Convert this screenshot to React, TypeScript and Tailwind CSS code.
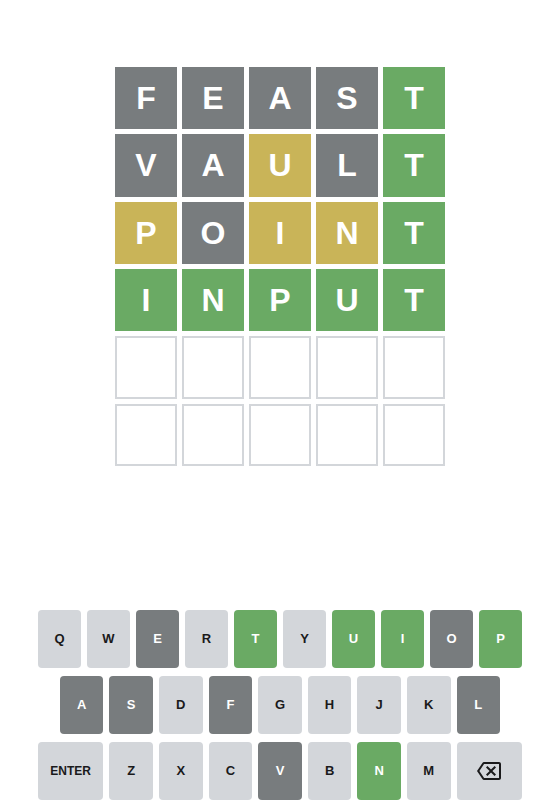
import React from "react";

type State = "absent" | "present" | "correct" | "empty" | "idle";

const guesses: { letter: string; state: State }[][] = [
  [
    { letter: "F", state: "absent" },
    { letter: "E", state: "absent" },
    { letter: "A", state: "absent" },
    { letter: "S", state: "absent" },
    { letter: "T", state: "correct" },
  ],
  [
    { letter: "V", state: "absent" },
    { letter: "A", state: "absent" },
    { letter: "U", state: "present" },
    { letter: "L", state: "absent" },
    { letter: "T", state: "correct" },
  ],
  [
    { letter: "P", state: "present" },
    { letter: "O", state: "absent" },
    { letter: "I", state: "present" },
    { letter: "N", state: "present" },
    { letter: "T", state: "correct" },
  ],
  [
    { letter: "I", state: "correct" },
    { letter: "N", state: "correct" },
    { letter: "P", state: "correct" },
    { letter: "U", state: "correct" },
    { letter: "T", state: "correct" },
  ],
];

const tileClass: Record<State, string> = {
  absent: "bg-[#787c7e] text-white",
  present: "bg-[#c9b458] text-white",
  correct: "bg-[#6aaa64] text-white",
  empty: "border-2 border-[#d3d6da] bg-white",
  idle: "border-2 border-[#d3d6da] bg-white",
};

const keyClass: Record<State, string> = {
  absent: "bg-[#787c7e] text-white",
  present: "bg-[#c9b458] text-white",
  correct: "bg-[#6aaa64] text-white",
  empty: "bg-[#d3d6da] text-[#1a1a1b]",
  idle: "bg-[#d3d6da] text-[#1a1a1b]",
};

const keyStates: Record<string, State> = {
  E: "absent",
  T: "correct",
  U: "correct",
  I: "correct",
  O: "absent",
  P: "correct",
  A: "absent",
  S: "absent",
  F: "absent",
  L: "absent",
  V: "absent",
  N: "correct",
};

function Tile({ letter, state }: { letter?: string; state: State }) {
  return (
    <div
      className={`flex items-center justify-center text-[32px] font-bold uppercase leading-none ${tileClass[state]}`}
    >
      {letter}
    </div>
  );
}

function BackspaceIcon() {
  return (
    <svg width="24" height="24" viewBox="0 0 24 24" fill="#1a1a1b">
      <path d="M22 3H7c-.69 0-1.23.35-1.59.88L0 12l5.41 8.11c.36.53.9.89 1.59.89h15c1.1 0 2-.9 2-2V5c0-1.1-.9-2-2-2zm0 16H7.07L2.4 12l4.66-7H22v14zm-11.59-2L14 13.41 17.590 17 19 15.59 15.41 12 19 8.41 17.59 7 14 10.59 10.41 7 9 8.41 12.59 12 9 15.59z" />
    </svg>
  );
}

function Key({
  label,
  wide,
  last,
}: {
  label: string;
  wide?: boolean;
  last?: boolean;
}) {
  const state = keyStates[label] ?? "idle";
  return (
    <button
      className={`flex h-[58px] items-center justify-center rounded-[4px] p-0 font-bold uppercase ${
        wide ? "flex-[1.5] text-[12px]" : "flex-1 text-[13px]"
      } ${last ? "mr-0" : "mr-[6px]"} ${keyClass[state]}`}
    >
      {label === "BACK" ? <BackspaceIcon /> : label}
    </button>
  );
}

export default function App() {
  const rows = [...guesses];
  while (rows.length < 6) {
    rows.push(Array.from({ length: 5 }, () => ({ letter: "", state: "empty" as State })));
  }

  return (
    <div className="flex h-screen w-full flex-col bg-white pl-[5px] font-['Liberation_Sans',Arial,sans-serif]">
      <div className="flex flex-1 justify-center">
        <div className="mt-[57px] grid h-[419px] w-[350px] grid-rows-6 gap-[5px] p-[10px]">
          {rows.map((row, r) => (
            <div key={r} className="grid grid-cols-5 gap-[5px]">
              {row.map((t, c) => (
                <Tile key={c} letter={t.letter} state={t.state} />
              ))}
            </div>
          ))}
        </div>
      </div>

      <div className="mx-auto w-full max-w-[500px] px-[8px]">
        <div className="mb-[8px] flex">
          {"QWERTYUIOP".split("").map((k, i) => (
            <Key key={k} label={k} last={i === 9} />
          ))}
        </div>
        <div className="mb-[8px] flex">
          <div className="flex-[0.5]" />
          {"ASDFGHJKL".split("").map((k, i) => (
            <Key key={k} label={k} last={i === 8} />
          ))}
          <div className="flex-[0.5]" />
        </div>
        <div className="mb-[8px] flex">
          <Key label="ENTER" wide />
          {"ZXCVBNM".split("").map((k) => (
            <Key key={k} label={k} />
          ))}
          <Key label="BACK" wide last />
        </div>
      </div>
    </div>
  );
}
